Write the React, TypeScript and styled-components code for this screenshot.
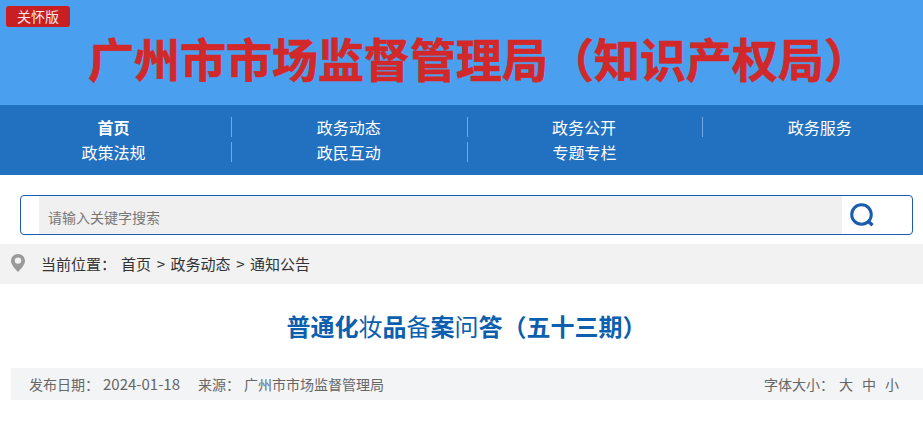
import React, { FC } from "react";
import styled, { createGlobalStyle } from "styled-components";

const GlobalStyle = createGlobalStyle`
    html, body {
        margin: 0;
        padding: 0;
        background: #fff;
        overflow: hidden;
        font-family: "Noto Sans CJK SC", "Liberation Sans", sans-serif;
    }
`

const Page = styled.div`
    width: 923px;
    height: 431px;
    overflow: hidden;
`

const Banner = styled.header`
    position: relative;
    height: 105px;
    background-color: #4a9fee;
    padding: 29px 0 0 88px;
    box-sizing: border-box;
`

const CareBadge = styled.a`
    position: absolute;
    left: 6px;
    top: 6px;
    width: 64px;
    height: 21px;
    line-height: 21px;
    text-align: center;
    font-size: 14px;
    color: #f4e6e8;
    background-color: #c71f22;
    border-radius: 3px;
`

const SiteName = styled.h1`
    margin: 0;
    font-size: 46px;
    line-height: 56px;
    font-weight: 700;
    -webkit-text-stroke: 0.7px #d2282a;
    color: #d2282a;
    white-space: nowrap;
`

const Nav = styled.nav`
    height: 70px;
    background-color: #2270c0;
    overflow: hidden;
    padding-top: 12px;
    box-sizing: border-box;
`

const NavGrid = styled.div`
    display: grid;
    grid-template-columns: repeat(4, 235.25px);
    grid-auto-rows: 20px;
    row-gap: 5px;
    margin-left: -3px;
    width: 941px;
`

const NavItem = styled.a<{ $active?: boolean; $last?: boolean }>`
    display: block;
    height: 20px;
    padding-right: 1px;
    line-height: 20px;
    text-align: center;
    font-size: 16px;
    font-weight: ${p => p.$active ? 700 : 400};
    color: #fff;
    border-right: ${p => p.$last ? "none" : "1px solid #6fa9e6"};
`

const SearchBar = styled.form`
    display: flex;
    height: 40px;
    margin: 20px 10px 9px 20px;
    box-sizing: border-box;
    border: 1px solid #1a5cad;
    border-radius: 4px;
    padding-left: 18px;
`

const SearchInput = styled.div`
    flex: 1;
    background-color: #f0f0f0;
    padding-left: 9px;
    font-size: 14px;
    line-height: 42px;
    color: #777;
`

const SearchButton = styled.div`
    width: 70px;
    display: flex;
    align-items: center;
    padding-left: 8px;
    box-sizing: border-box;
`

const Crumbs = styled.div`
    height: 40px;
    padding: 0 0 2px 10px;
    box-sizing: border-box;
    background-color: #f2f2f2;
    display: flex;
    align-items: center;
    font-size: 15px;
    color: #333;
`

const CrumbLabel = styled.span`
    margin: 0 5px 0 15px;
`

const CrumbTrail = styled.div`
    display: flex;
    gap: 5.6px;
`

const ArticleTitle = styled.h2`
    margin: 24px 0 0;
    height: 60px;
    padding-left: 10px;
    text-align: center;
    font-size: 24px;
    line-height: 36px;
    font-weight: 700;
    color: #0b5fae;
`

const ThinChar = styled.span`
    font-weight: 400;
`

const MetaBar = styled.div`
    height: 32px;
    margin-left: 11px;
    padding: 0 24px 1px 18px;
    box-sizing: border-box;
    background-color: #f3f4f6;
    display: flex;
    justify-content: space-between;
    align-items: center;
    font-size: 14px;
    color: #666;
`

const MetaGroup = styled.div`
    display: flex;
    align-items: center;
`

const MetaValue = styled.span<{ $date?: boolean }>`
    margin: ${p => p.$date ? "0 18px 0 4px" : "0 0 0 4px"};
    font-size: ${p => p.$date ? "15px" : "14px"};
`

const SizeLinks = styled.div`
    display: flex;
    gap: 9px;
    margin-left: 5px;
`

const navItems = ["首页", "政务动态", "政务公开", "政务服务", "政策法规", "政民互动", "专题专栏"];

const PinIcon: FC = () => (
    <svg width="16" height="20" viewBox="0 0 16 20">
        <path d="M8 1C4 1 1 4 1 7.8c0 4 4.2 8.200 7 11.200 2.800-3 7-7.200 7-11.200C15 4 12 1 8 1z" fill="#9a9a9a" />
        <circle cx="8" cy="7.600" r="3.200" fill="#f2f2f2" />
    </svg>
)

const SearchIcon: FC = () => (
    <svg width="25" height="25" viewBox="0 0 25 25" fill="none" stroke="#1a5cad">
        <circle cx="11.500" cy="11.500" r="9.800" strokeWidth="3" />
        <path d="M18 18l4.500 4.300" strokeWidth="3.400" />
    </svg>
)

const App: FC = () => {
    return (
        <Page>
            <GlobalStyle />
            <Banner>
                <CareBadge>关怀版</CareBadge>
                <SiteName>广州市市场监督管理局（知识产权局）</SiteName>
            </Banner>
            <Nav>
                <NavGrid>
                    {navItems.map((item, i) => (
                        <NavItem key={item} $active={i === 0} $last={i === 3 || i === 6}>{item}</NavItem>
                    ))}
                </NavGrid>
            </Nav>
            <SearchBar>
                <SearchInput>请输入关键字搜索</SearchInput>
                <SearchButton><SearchIcon /></SearchButton>
            </SearchBar>
            <Crumbs>
                <PinIcon />
                <CrumbLabel>当前位置：</CrumbLabel>
                <CrumbTrail>
                    <span>首页</span>
                    <span>&gt;</span>
                    <span>政务动态</span>
                    <span>&gt;</span>
                    <span>通知公告</span>
                </CrumbTrail>
            </Crumbs>
            <ArticleTitle>
                普通化<ThinChar>妆</ThinChar>品<ThinChar>备</ThinChar>案<ThinChar>问</ThinChar>答（五十三期）
            </ArticleTitle>
            <MetaBar>
                <MetaGroup>
                    <span>发布日期：</span>
                    <MetaValue $date>2024-01-18</MetaValue>
                    <span>来源：</span>
                    <MetaValue>广州市市场监督管理局</MetaValue>
                </MetaGroup>
                <MetaGroup>
                    <span>字体大小：</span>
                    <SizeLinks>
                        <span>大</span>
                        <span>中</span>
                        <span>小</span>
                    </SizeLinks>
                </MetaGroup>
            </MetaBar>
        </Page>
    )
}

export default App;
